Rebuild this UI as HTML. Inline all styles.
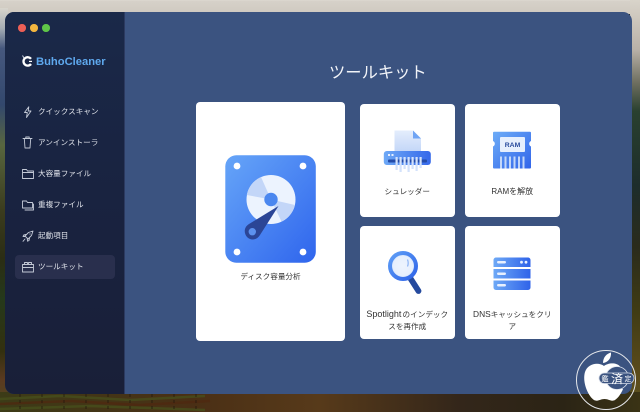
<!DOCTYPE html>
<html lang="ja"><head><meta charset="utf-8">
<style>
html,body{margin:0;padding:0}
body{width:640px;height:412px;overflow:hidden;position:relative;font-family:"Liberation Sans","Noto Sans CJK JP",sans-serif;background:#2a2a20}
.a{position:absolute}
.bg{left:0;top:0;width:640px;height:412px}
.win{left:5px;top:12px;width:627px;height:382px;border-radius:9px;overflow:hidden;background:#3b5380}
.side{left:0;top:0;width:119px;height:382px;background:linear-gradient(180deg,#1a2949 0%,#192442 35%,#191f38 100%);border-right:1px solid #2c3a60}
.dot{width:7.5px;height:7.5px;border-radius:50%}
.nav{left:38px;font-size:7.6px;color:#e2e5ec;white-space:nowrap;line-height:12px}
.sel{left:15px;top:255px;width:100px;height:23.5px;background:#292f4d;border-radius:4px}
.card{background:#fff;border-radius:4px}
.lab{font-size:7.6px;color:#333;text-align:center;line-height:14px;white-space:nowrap}
svg.ic{position:absolute;fill:none;stroke:#c3c9d6;stroke-width:.9;stroke-linejoin:round;stroke-linecap:round}
</style></head><body>
<svg class="a bg" width="640" height="412" viewBox="0 0 640 412">
<defs>
<linearGradient id="sky" x1="0" y1="0" x2="0" y2="1"><stop offset="0" stop-color="#dedad2"/><stop offset=".08" stop-color="#d6d1c9"/><stop offset="1" stop-color="#cfc9c0"/></linearGradient>
<linearGradient id="l" x1="0" y1="0" x2="0" y2="1"><stop offset="0" stop-color="#d8d5cd"/><stop offset=".05" stop-color="#a5adb4"/><stop offset=".1" stop-color="#46587e"/><stop offset=".24" stop-color="#33486d"/><stop offset=".34" stop-color="#58663f"/><stop offset=".5" stop-color="#3b3c1e"/><stop offset=".62" stop-color="#2b2d14"/><stop offset=".72" stop-color="#25391b"/><stop offset=".85" stop-color="#33300f"/><stop offset=".92" stop-color="#5a3a20"/><stop offset="1" stop-color="#4f4a1f"/></linearGradient>
<linearGradient id="r" x1="0" y1="0" x2="0" y2="1"><stop offset="0" stop-color="#d9d4ca"/><stop offset=".12" stop-color="#b9b1a8"/><stop offset=".2" stop-color="#6f6f60"/><stop offset=".27" stop-color="#29402f"/><stop offset=".45" stop-color="#1d2d2b"/><stop offset=".6" stop-color="#2a2b1c"/><stop offset=".75" stop-color="#3f3b14"/><stop offset=".92" stop-color="#5d4c1c"/><stop offset="1" stop-color="#54501e"/></linearGradient>
<linearGradient id="b" x1="0" y1="0" x2="1" y2="0"><stop offset="0" stop-color="#3c3b17"/><stop offset=".3" stop-color="#4a2f15"/><stop offset=".5" stop-color="#573a1a"/><stop offset=".72" stop-color="#33261a"/><stop offset=".88" stop-color="#2b2415"/><stop offset="1" stop-color="#3a3315"/></linearGradient>
</defs>
<rect width="640" height="14" fill="url(#sky)"/>
<rect y="8" width="8" height="404" fill="url(#l)"/>
<rect x="630" width="10" height="412" fill="url(#r)"/>
<rect y="392" width="640" height="20" fill="url(#b)"/>
<g fill="none" stroke-width="2.500" opacity=".75">
<path d="M0 399 60 396 130 400 205 396" stroke="#47501c"/>
<path d="M0 404 70 401 140 405 210 401" stroke="#4f2810"/>
<path d="M0 409 90 406 205 410" stroke="#47501c"/>
</g>
<path d="M20 394v18M42 394v18M64 394v18M86 394v18M108 394v18M130 394v18M152 394v18M174 394v18M196 394v18" stroke="#241a0e" stroke-width=".8" stroke-dasharray="3 3"/>
</svg>

<div class="a win">
  <div class="a side"></div>
  <div class="a dot" style="left:13px;top:12px;background:#ed5f56"></div>
  <div class="a dot" style="left:25px;top:12px;background:#f4b63f"></div>
  <div class="a dot" style="left:37px;top:12px;background:#5fc648"></div>
</div>

<!-- logo -->
<svg class="a" style="left:21px;top:54px" width="13" height="14" viewBox="0 0 13 14"><path d="M1.500 1.500 3 4" stroke="#cfd6e6" stroke-width="1" fill="none"/><path d="M10 4.800A4.200 4.200 0 1 0 10 10" stroke="#fff" stroke-width="2.300" fill="none"/><path d="M8 7.400h3" stroke="#fff" stroke-width="1.200"/></svg>
<div class="a" style="left:36px;top:55px;font-size:11.200px;font-weight:700;color:#5fa9ee;line-height:14px;white-space:nowrap">BuhoCleaner</div>

<!-- selection -->
<div class="a sel"></div>

<!-- nav icons -->
<svg class="ic" style="left:20px;top:104px" width="16" height="16" viewBox="0 0 16 16"><path d="M8.800 2.800 4.500 8.500H7.300L6.500 13.500 11 7H8.200Z"/></svg>
<svg class="ic" style="left:20px;top:135px" width="16" height="16" viewBox="0 0 16 16"><path d="M3 3.500h9M5.800 3.500V2h3.400v1.500M4.300 3.500l.7 9.500h5l.7-9.500"/></svg>
<svg class="ic" style="left:20px;top:166px" width="16" height="16" viewBox="0 0 16 16"><path d="M2.500 3.500h4l1 1.500h6v7.500h-11zM2.500 6.500h11"/></svg>
<svg class="ic" style="left:20px;top:197px" width="16" height="16" viewBox="0 0 16 16"><path d="M2.500 4h4l1 1.500h5v5.500h-10zM5 13h8.500V7"/></svg>
<svg class="ic" style="left:20px;top:228px" width="16" height="16" viewBox="0 0 16 16"><path d="M13 3 8.500 4.500 5 8 8 11 11.500 7.500zM6 6.500 3.800 7 3 8.500 5.200 8.500M9.500 10.200 9 12.500 7.500 13.200 7.300 10.800M5 11 3 13.300M9.800 6h.4"/></svg>
<svg class="ic" style="left:20px;top:259px" width="16" height="16" viewBox="0 0 16 16"><path d="M2.500 5.500h11v7.500h-11zM2.500 8.500h11M4.500 5.500V3.500h3v2M8.500 5.500V3.500h3v2"/></svg>

<div class="a nav" style="top:106px">クイックスキャン</div>
<div class="a nav" style="top:137px">アンインストーラ</div>
<div class="a nav" style="top:168px">大容量ファイル</div>
<div class="a nav" style="top:199px">重複ファイル</div>
<div class="a nav" style="top:230px">起動項目</div>
<div class="a nav" style="top:261px">ツールキット</div>

<!-- title -->
<div class="a" style="left:329px;top:61.500px;font-size:16.300px;color:#f2f4f8;line-height:22px;white-space:nowrap">ツールキット</div>

<!-- cards -->
<div class="a card" style="left:196px;top:102px;width:149px;height:238.500px"></div>
<div class="a card" style="left:359.500px;top:103.500px;width:95.500px;height:113px"></div>
<div class="a card" style="left:464.500px;top:103.500px;width:95.500px;height:113px"></div>
<div class="a card" style="left:359.500px;top:226px;width:95.500px;height:113px"></div>
<div class="a card" style="left:464.500px;top:226px;width:95.500px;height:113px"></div>

<!-- disk icon -->
<svg class="a" style="left:225px;top:155px" width="91" height="108" viewBox="0 0 91 108">
<defs><linearGradient id="dg" x1="0" y1="0" x2="1" y2="1"><stop offset="0" stop-color="#66a5f8"/><stop offset="1" stop-color="#2f65ed"/></linearGradient></defs>
<rect x=".3" y=".3" width="90.500" height="107.400" rx="11" fill="url(#dg)"/>
<circle cx="12" cy="11" r="3.400" fill="#fff"/><circle cx="78" cy="11" r="3.400" fill="#fff"/><circle cx="12" cy="97" r="3.400" fill="#fff"/><circle cx="78" cy="97" r="3.400" fill="#fff"/>
<circle cx="46" cy="44.500" r="24.500" fill="#ecf3fe"/>
<path d="M46 44.500 21.800 40A24.500 24.500 0 0 1 36 22Z" fill="#c3d6f8"/>
<path d="M46 44.500 70 50A24.500 24.500 0 0 1 56.500 66.500Z" fill="#c3d6f8"/>
<circle cx="46" cy="44.500" r="6.700" fill="#4b87ef"/>
<path d="M53.500 51 24 69C19 72 18.500 78 22 82C26 86 32 85 35 80Z" fill="#2b4596"/>
<circle cx="27.300" cy="76.700" r="3.700" fill="#5c91ee"/>
</svg>
<div class="a lab" style="left:196px;top:270px;width:149px">ディスク容量分析</div>

<!-- shredder -->
<svg class="a" style="left:383px;top:128px" width="50" height="46" viewBox="0 0 50 46">
<defs><linearGradient id="sg" x1="0" y1="0" x2="1" y2="0"><stop offset="0" stop-color="#6ea9f6"/><stop offset="1" stop-color="#3568ea"/></linearGradient>
<linearGradient id="pg" x1="0" y1="0" x2="0" y2="1"><stop offset="0" stop-color="#e4edfc"/><stop offset="1" stop-color="#c4d7f8"/></linearGradient></defs>
<path d="M11.500 2.500H30L38 10.500V23H11.500Z" fill="url(#pg)"/>
<path d="M30 2.500 38 10.500H30Z" fill="#6fa4f4"/>
<rect x=".8" y="23" width="47" height="14" rx="3" fill="url(#sg)"/>
<rect x="5" y="31.500" width="39" height="3" rx="1" fill="#234ba8"/>
<rect x="5" y="26" width="2" height="2" fill="#e8f0fe"/><rect x="8.500" y="26" width="2" height="2" fill="#e8f0fe"/>
<g fill="#d3e2fb"><rect x="12.500" y="29" width="2.200" height="13"/><rect x="16.500" y="29" width="2.200" height="15"/><rect x="20.500" y="29" width="2.200" height="12"/><rect x="24.500" y="29" width="2.200" height="15"/><rect x="28.500" y="29" width="2.200" height="12"/><rect x="32.500" y="29" width="2.200" height="14"/><rect x="36.500" y="29" width="2.200" height="11"/></g>
</svg>
<div class="a lab" style="left:359.500px;top:185px;width:95.500px">シュレッダー</div>

<!-- RAM -->
<svg class="a" style="left:492px;top:131px" width="40" height="39" viewBox="0 0 40 39">
<defs><linearGradient id="rg" x1="0" y1="0" x2="1" y2="1"><stop offset="0" stop-color="#6dacf7"/><stop offset="1" stop-color="#3165ea"/></linearGradient></defs>
<path d="M2 .7H38A1 1 0 0 1 39 1.700V10A3 3 0 0 0 39 15.500V36.500A1 1 0 0 1 38 37.500H2A1 1 0 0 1 1 36.500V15.500A3 3 0 0 0 1 10V1.700A1 1 0 0 1 2 .7Z" fill="url(#rg)"/>
<rect x="8" y="6" width="25" height="15" rx="1" fill="#e6effd"/>
<g fill="#c3d7f9"><rect x="8" y="25.500" width="2" height="12"/><rect x="12.500" y="25.500" width="2" height="12"/><rect x="17" y="25.500" width="2" height="12"/><rect x="21.500" y="25.500" width="2" height="12"/><rect x="26" y="25.500" width="2" height="12"/><rect x="30.500" y="25.500" width="2" height="12"/></g>
<text x="20.500" y="16" font-family="Liberation Sans" font-size="6.800" fill="#274a9c" text-anchor="middle" font-weight="700">RAM</text>
</svg>
<div class="a lab" style="left:464.500px;top:185px;width:95.500px;font-size:8px">RAMを解放</div>

<!-- magnifier -->
<svg class="a" style="left:386px;top:250px" width="38" height="46" viewBox="0 0 38 46">
<defs><linearGradient id="mg" x1="0" y1="0" x2="1" y2="1"><stop offset="0" stop-color="#5e9ef6"/><stop offset="1" stop-color="#2e63e8"/></linearGradient>
<radialGradient id="mi"><stop offset="0" stop-color="#edf4fe"/><stop offset=".75" stop-color="#e6effd"/><stop offset="1" stop-color="#bcd4fa"/></radialGradient></defs>
<path d="M24.500 28.500 32.500 41" stroke="#254a9e" stroke-width="5.800" stroke-linecap="round"/>
<circle cx="17" cy="16" r="13" fill="url(#mi)" stroke="url(#mg)" stroke-width="4"/>
<path d="M21.500 9.500C22.500 12 22.500 14 21.500 16.500" stroke="#8fb6f5" stroke-width="1.200" fill="none"/>
</svg>
<div class="a lab" style="left:359.500px;top:308px;width:95.500px;line-height:12px"><span style="font-size:9px">Spotlight</span> <span style="margin-left:-1px">のインデック</span><br>スを再作成</div>

<!-- DNS -->
<svg class="a" style="left:493px;top:257px" width="38" height="34" viewBox="0 0 38 34">
<defs><linearGradient id="ng" x1="0" y1="0" x2="1" y2="0"><stop offset="0" stop-color="#6ea9f6"/><stop offset="1" stop-color="#2f63e9"/></linearGradient></defs>
<path d="M3 .5H35A2.500 2.500 0 0 1 37.500 3V10H.5V3A2.500 2.500 0 0 1 3 .5Z" fill="url(#ng)"/>
<rect x=".5" y="12" width="37" height="9.500" fill="url(#ng)"/>
<path d="M.5 23.500H37.500V30.500A2.500 2.500 0 0 1 35 33H3A2.500 2.500 0 0 1 .5 30.500Z" fill="url(#ng)"/>
<g fill="#e8f0fe"><rect x="4" y="4" width="9" height="2.500" rx="1.200"/><rect x="4" y="15.500" width="9" height="2.500" rx="1.200"/><rect x="4" y="27" width="9" height="2.500" rx="1.200"/><circle cx="28.500" cy="5.200" r="1.400"/><circle cx="33" cy="5.200" r="1.400"/></g>
</svg>
<div class="a lab" style="left:464.500px;top:308px;width:95.500px;line-height:12px"><span style="font-size:8.400px">DNS</span>キャッシュをクリ<br>ア</div>

<!-- badge -->
<svg class="a" style="left:575px;top:348px" width="65" height="64" viewBox="0 0 65 64">
<circle cx="31" cy="32" r="29.500" fill="none" stroke="#e4e6ea" stroke-width="1"/>
<path d="M28 15C28 9 32 5.500 36 4.500C36.500 10 33 14.500 28 15Z" fill="#fff"/>
<path d="M29 18C24 14 13 15 10 24C7 34 13 48 19 52C23 54 25 51 29.500 51C34 51 36 54 40 52C43 50 46 46 48 41C41 38 38 32 39 27C40 22 43 20 45 18.500C41 14 33 15 29 18Z" fill="#fff"/>
<circle cx="42" cy="30" r="11.500" fill="#3b5380" stroke="#dfe4ee" stroke-width=".8"/>
<rect x="24" y="25" width="35" height="10.500" rx="5.200" fill="#3b5380" stroke="#d5dbe8" stroke-width=".8"/>
<text x="30" y="33" font-family="Liberation Sans,Noto Sans CJK JP,sans-serif" font-size="7" fill="#fff" text-anchor="middle">鑑</text>
<text x="42" y="35" font-family="Liberation Sans,Noto Sans CJK JP,sans-serif" font-size="12" fill="#fff" text-anchor="middle">済</text>
<text x="53" y="33" font-family="Liberation Sans,Noto Sans CJK JP,sans-serif" font-size="7" fill="#fff" text-anchor="middle">定</text>
</svg>
</body></html>
